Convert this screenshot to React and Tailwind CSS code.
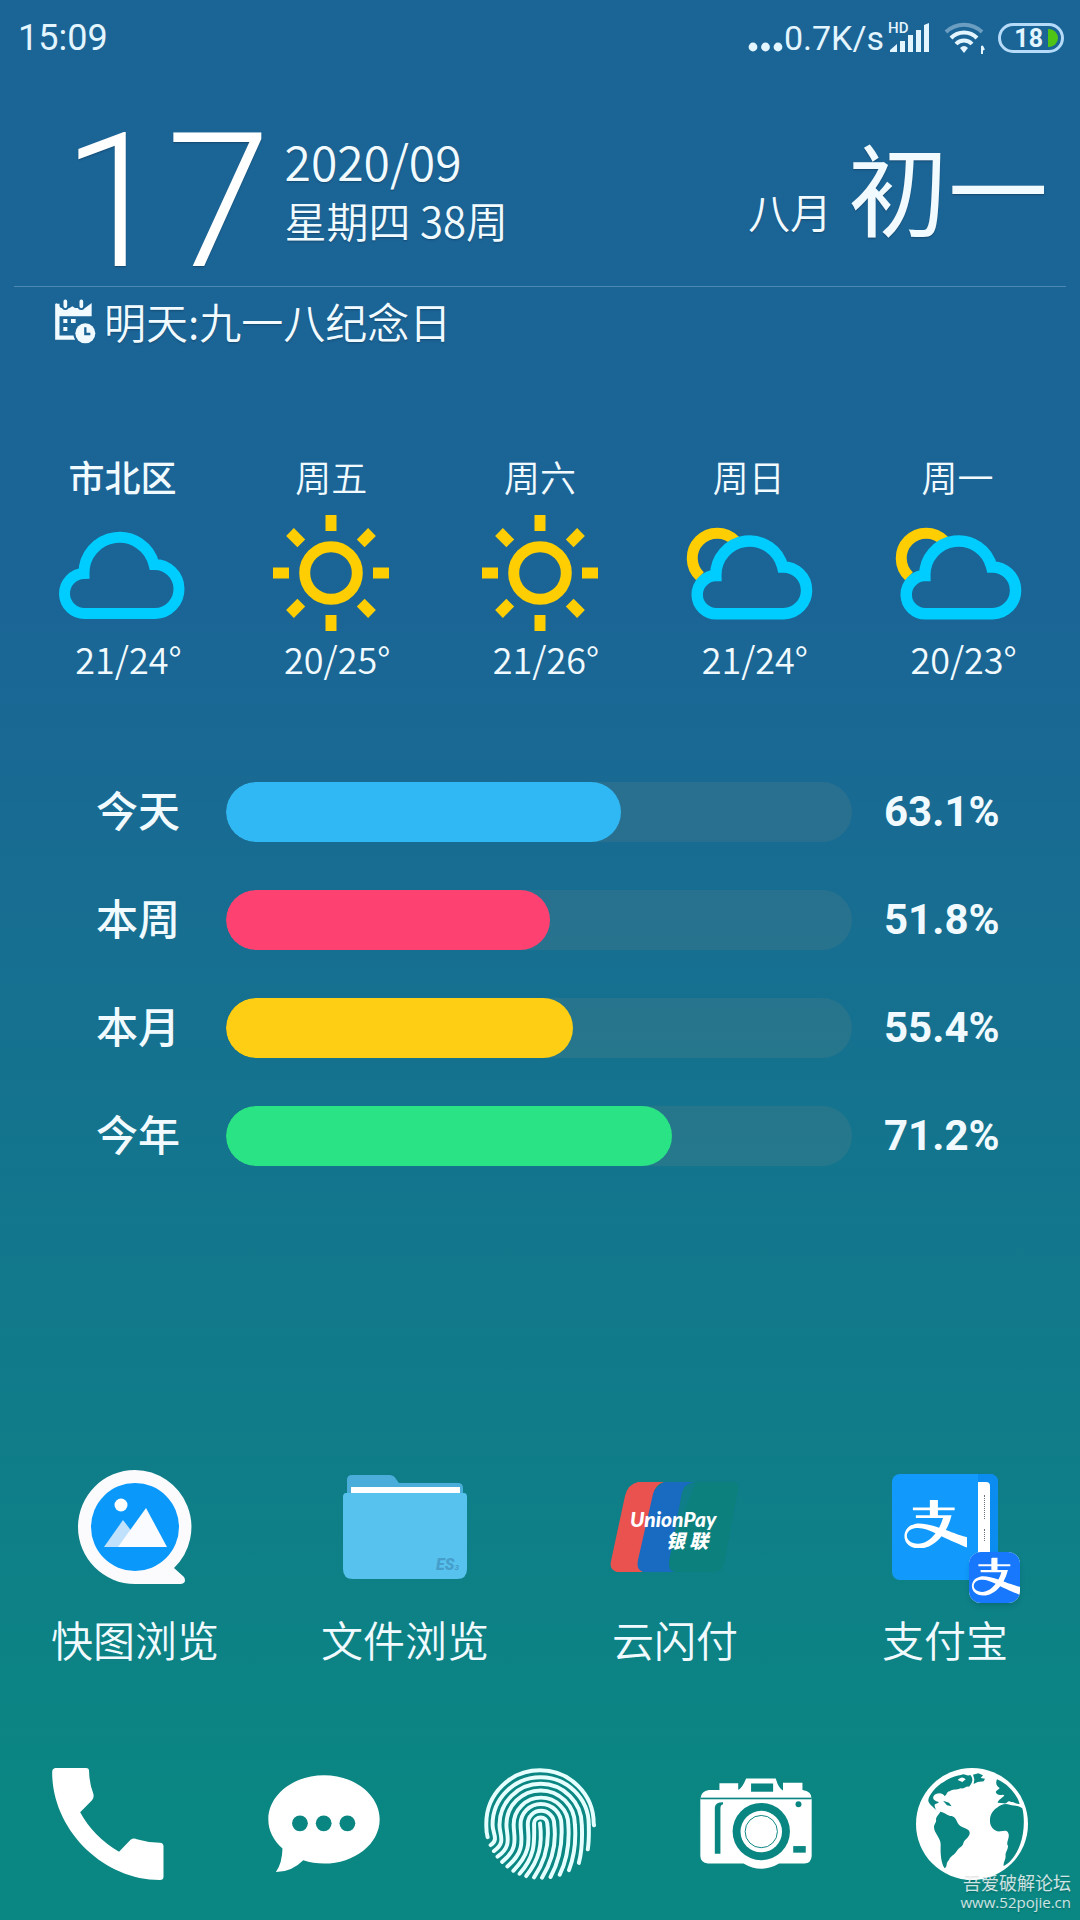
import React from 'react';
import { SiAlipay } from 'react-icons/si';

const forecast = [
    { day: '市北区', icon: 'cloud', temp: '21/24°', current: true },
    { day: '周五', icon: 'sun', temp: '20/25°' },
    { day: '周六', icon: 'sun', temp: '21/26°' },
    { day: '周日', icon: 'partly', temp: '21/24°' },
    { day: '周一', icon: 'partly', temp: '20/23°' },
];

const progress = [
    { label: '今天', value: 63.1, color: 'bg-[#2fb8f4]' },
    { label: '本周', value: 51.8, color: 'bg-[#fd4272]' },
    { label: '本月', value: 55.4, color: 'bg-[#fdce13]' },
    { label: '今年', value: 71.2, color: 'bg-[#29e384]' },
];

const CLOUD = 'M26 65.5 A35.5 35.5 0 0 1 96 56.5 A24.5 24.5 0 0 1 97 105.5 H27 A20 20 0 0 1 26 65.5 Z';

const RIDGES = [
    'M81 292 C76 275 77 262 77 250 A163 161 0 0 1 403 250 L404 256',
    'M90 316 C116 300 96 280 96 254 A146 144 0 0 1 388 254 C389 285 388 310 385 329',
    'M100 334 C138 308 117 286 117 255 A125 125 0 0 1 367 255 C369 300 366 340 358 370',
    'M111 351 C158 318 138 288 138 254 A104 104 0 0 1 346 254 C350 305 342 355 328 392',
    'M125 367 C178 325 160 292 160 254 A83 82 0 0 1 326 254 C330 310 320 365 300 406',
    'M141 381 C200 330 181 295 181 253 A62 62 0 0 1 305 253 C309 312 300 362 272 413',
    'M159 394 C220 332 203 295 203 252 A40 40 0 0 1 283 252 C291 312 277 365 246 415',
    'M178 403 C230 345 222 300 222 250 A20 18 0 0 1 262 250 C270 312 255 365 222 414',
    'M240 250 C248 315 238 360 198 410',
];

function WeatherIcon({ type }) {
    return (
        <svg viewBox="0 0 128 128" className="h-32 w-32" fill="none" strokeWidth="11" aria-hidden="true">
            {type === 'cloud' && <path d={CLOUD} transform="translate(0 -1)" stroke="#00cdff" />}
            {type === 'sun' && (
                <g stroke="#fecd02">
                    <circle cx="64" cy="64" r="26.3" />
                    {[0, 45, 90, 135, 180, 225, 270, 315].map((angle) => (
                        <path key={angle} d="M64 6 V22" transform={`rotate(${angle} 64 64)`} />
                    ))}
                </g>
            )}
            {type === 'partly' && (
                <g transform="translate(0 -1)">
                    <path d="M50 32.6 A25 25 0 1 0 15 68.3" stroke="#fecd02" />
                    <path d={CLOUD} transform="translate(6 5) scale(.955)" strokeWidth="12" stroke="#00cdff" />
                </g>
            )}
        </svg>
    );
}

function StatusBar() {
    return (
        <div className="flex h-[72px] items-center justify-between pl-[18px] pr-4 pt-1 font-['Roboto',sans-serif] font-normal text-[#e3f5ff]">
            <span className="text-[36px] leading-none">15:09</span>
            <div className="flex items-center">
                <svg viewBox="0 0 36 28" className="h-7 w-9" fill="currentColor" aria-hidden="true">
                    <circle cx="5" cy="23" r="4.4" />
                    <circle cx="17.5" cy="23" r="4.4" />
                    <circle cx="30" cy="23" r="4.4" />
                </svg>
                <span className="text-[34px] leading-none">0.7K/s</span>
                {/* Señal */}
                <svg viewBox="0 0 42 38" className="ml-1 h-[38px] w-[42px]" fill="currentColor" aria-hidden="true">
                    <text x="0" y="14" fontSize="15" fontWeight="500" fontFamily="Roboto, sans-serif">HD</text>
                    <path d="M2 33 V31 L9 25 V33 Z M12 22 h5 v11 h-5z M20 16 h5 v17 h-5z M28 11 h5 v22 h-5z M36 6 L41 4 V33 H36 Z" />
                </svg>
                {/* Wifi */}
                <svg viewBox="0 0 42 34" className="ml-[14px] h-[34px] w-[42px]" fill="none" stroke="currentColor" strokeWidth="4" aria-hidden="true">
                    <path d="M2 11 A26 26 0 0 1 38 11" opacity=".4" />
                    <path d="M7 17 A18 18 0 0 1 33 17" />
                    <path d="M12 23 A11 11 0 0 1 28 23" />
                    <path d="M16 27 Q20 23 24 27 L20 32 Z" fill="currentColor" stroke="none" />
                    <path d="M38 33 V25 L40 29" strokeWidth="2" />
                </svg>
                <div className="ml-3 flex h-[30px] w-[66px] items-center justify-end gap-[5px] rounded-full border-[3px] border-[#b5dbf8] pr-[3px]">
                    <span className="text-[25px] font-bold leading-none">18</span>
                    <span className="h-[18px] w-[10px] rounded-l-[2px] rounded-r-full bg-[#4fc414]" />
                </div>
            </div>
        </div>
    );
}

function CalendarIcon() {
    return (
        <svg viewBox="0 0 123 135" className="h-[45px] w-[41px]" fill="none" stroke="#f1faff" aria-hidden="true">
            <path d="M7 14 V116 H60" strokeWidth="13" />
            <path d="M3 12 L18 27 H44 L52 22 L60 27 H90 L110 12 V52 H3 Z" fill="#f1faff" stroke="none" />
            <path d="M31 5 V22 M79 5 V22" stroke="#1b6496" strokeWidth="22" strokeLinecap="round" />
            <path d="M31 7 V22 M79 7 V22" strokeWidth="11" strokeLinecap="round" />
            <path d="M25 66 H37 M48 66 H62 M25 90 H37" strokeWidth="12" />
            <circle cx="91" cy="103" r="36" fill="#1b6496" stroke="none" />
            <circle cx="91" cy="103" r="30" fill="#f1faff" stroke="none" />
            <path d="M91 85 V105 H106" stroke="#1b6496" strokeWidth="7" />
        </svg>
    );
}

function QuickPicIcon() {
    return (
        <svg viewBox="0 0 114 114" className="h-[114px] w-[114px]" aria-hidden="true">
            <path d="M57 0 A57 57 0 0 1 96 98 L106 107 Q109 113 103 114 H57 A57 57 0 0 1 57 0 Z" fill="#fbfbfd" />
            <circle cx="57" cy="57" r="44" fill="#0b98fb" />
            <circle cx="43" cy="35" r="6.5" fill="#fff" />
            <path d="M26 77 L45 50 L55 63 L45 77 Z" fill="#bfe1fc" />
            <path d="M40 77 L68 38 L89 77 Z" fill="#f9fbfe" />
        </svg>
    );
}

function FolderIcon() {
    return (
        <svg viewBox="0 0 124 104" className="h-[104px] w-[124px]" aria-hidden="true">
            <path d="M4 24 V5 Q4 0 9 0 H46 Q51 0 53 4 L56 8 H115 Q120 8 120 13 V24 Z" fill="#4badd9" />
            <path d="M3 18 H121 Q124 18 124 22 V94 Q124 104 114 104 H10 Q0 104 0 94 V22 Q0 18 3 18 Z" fill="#58c2ef" />
            <rect x="8" y="12" width="109" height="6" fill="#fff" />
            <text x="93" y="95" fontSize="16" fontWeight="900" fontStyle="italic" fontFamily="Roboto, sans-serif" fill="#469fcb">
                ES<tspan fontSize="8">3</tspan>
            </text>
        </svg>
    );
}

function UnionPayIcon() {
    return (
        <svg viewBox="0 0 130 90" className="h-[90px] w-[130px]" aria-hidden="true">
            <path d="M86 0 H123 Q130 0 128 8 L114 82 Q112 90 104 90 H50 Z" fill="#0c807d" />
            <path d="M54 0 H84 Q74 2 72 10 L59 80 Q58 90 66 90 H34 Q24 88 27 78 L42 10 Z" fill="#186bc1" />
            <path d="M28 0 H54 Q46 2 43 12 L28 78 Q26 88 33 90 H7 Q-1 88 1 79 L15 14 Q18 2 28 0 Z" fill="#e9524f" />
            <text x="20" y="45" fontSize="21" fontWeight="900" fontStyle="italic" fontFamily="Lato, sans-serif" fill="#fff">UnionPay</text>
            <text x="56" y="66" fontSize="19" fontWeight="900" fontStyle="italic" fontFamily="'Noto Sans CJK SC', sans-serif" fill="#fff">银 联</text>
        </svg>
    );
}

function AlipayIcon() {
    return (
        <div className="relative h-[106px] w-[106px] rounded-lg bg-[#119afb] pl-[9px] pt-[26px]">
            <div className="h-[48px] w-[66px] overflow-hidden bg-white">
                <SiAlipay className="-ml-[2px] -mt-[10px] h-[70px] w-[70px] max-w-none text-[#119afb]" />
            </div>
            <div className="absolute right-0 top-0 h-[106px] w-5 rounded-r-lg bg-[#0a8cf0]" />
            <div className="absolute right-2 top-2 flex h-[72px] w-3 flex-col items-center justify-around rounded-tr bg-white py-2">
                <span className="h-6 w-0 border-l border-dotted border-gray-500" />
                <span className="h-3 w-0 border-l border-dotted border-gray-500" />
            </div>
            <div className="absolute -bottom-[23px] -right-[22px] h-[51px] w-[51px] overflow-hidden rounded-xl bg-white shadow-md">
                <SiAlipay className="h-full w-full scale-105 text-[#1777fd]" />
            </div>
        </div>
    );
}

const apps = [
    { name: '快图浏览', Icon: QuickPicIcon },
    { name: '文件浏览', Icon: FolderIcon },
    { name: '云闪付', Icon: UnionPayIcon },
    { name: '支付宝', Icon: AlipayIcon },
];

function PhoneIcon() {
    return (
        <svg viewBox="65 82 339 340" className="h-28 w-28" fill="#fff" aria-hidden="true">
            <path d="M75 82 H168 Q177 82 177 92 Q178 130 190 160 Q193 172 186 180 L150 216 Q190 290 268 336 L303 300 Q312 293 322 298 Q355 308 392 309 Q403 310 403 320 V412 Q403 422 392 422 C220 422 65 270 65 95 Q65 83 75 82 Z" />
        </svg>
    );
}

function MessageIcon() {
    return (
        <svg viewBox="714 82 338 340" className="h-28 w-28" fill="#fff" aria-hidden="true">
            <path d="M883 104 C976 104 1052 164 1052 238 C1052 312 976 372 883 372 Q850 372 820 362 Q785 398 737 398 Q756 370 757 326 C730 302 714 272 714 238 C714 164 790 104 883 104 Z" />
            <g fill="#0a8682">
                <circle cx="810" cy="250" r="24" />
                <circle cx="882" cy="250" r="24" />
                <circle cx="954" cy="250" r="24" />
            </g>
        </svg>
    );
}

function FingerprintIcon() {
    return (
        <svg viewBox="70 82 340 340" className="h-28 w-28" fill="none" stroke="#e6ffff" strokeWidth="12" strokeLinecap="round" aria-hidden="true">
            {RIDGES.map((d) => <path key={d} d={d} />)}
        </svg>
    );
}

function CameraIcon() {
    return (
        <svg viewBox="719 82 338 340" className="h-28 w-28" fill="#fff" aria-hidden="true">
            <path d="M777 128 H834 V148 Q846 144 858 114 H948 Q956 144 970 150 V127 H1029 V149 Q1057 152 1057 176 V350 Q1055 372 1035 372 H958 Q904 404 850 372 H742 Q720 370 719 350 V176 Q721 152 745 149 H777 Z" />
            <g fill="#0a8682">
                <rect x="873" y="129" width="67" height="25" />
                <rect x="719" y="172" width="338" height="5" />
                <path d="M763 342 V202 Q764 186 788 186 V192 Q780 194 780 204 V342 Z" />
                <circle cx="1017" cy="192" r="9" />
                <rect x="1001" y="319" width="38" height="20" />
                <circle cx="904" cy="275" r="87" />
            </g>
            <circle cx="904" cy="275" r="63" />
            <circle cx="904" cy="275" r="49" fill="none" stroke="#0a8682" strokeWidth="3" />
        </svg>
    );
}

function GlobeIcon() {
    return (
        <svg viewBox="77 82 336 336" className="h-28 w-28" aria-hidden="true">
            <circle cx="245" cy="250" r="168" fill="#fff" />
            <g fill="#0a8682">
                <path d="M150 213 C165 215 172 226 184 226 C200 230 198 248 210 256 C225 264 240 266 238 279 C235 292 222 296 219 308 C216 320 205 320 199 332 C192 344 180 346 176 358 C166 366 172 378 163 383 C152 366 150 340 151 312 C152 292 130 276 131 258 C132 248 139 246 137 234 C140 225 145 222 150 213 Z" />
                <path d="M322 200 C330 192 345 187 358 192 C370 196 380 192 396 203 C404 235 401 280 390 310 C378 345 357 368 340 376 C338 366 346 358 346 346 C343 336 354 326 353 316 C345 306 360 292 354 278 C350 266 338 272 330 272 C312 274 298 258 299 240 C298 224 308 208 322 200 Z" />
                <path d="M115 184 C108 172 136 136 160 124 C176 112 200 104 212 103 C222 96 228 108 240 103 C252 118 244 128 236 138 C228 134 222 146 210 143 C198 150 188 144 178 152 C166 154 172 164 162 166 C158 155 136 156 130 166 C124 176 136 182 146 184 C140 192 132 186 133 196 C134 206 142 212 146 218 C140 206 122 198 115 184 Z" />
                <path d="M320 116 C350 128 380 160 388 190 C378 192 372 182 362 184 C352 176 350 192 340 188 L322 186 C324 176 338 172 342 164 C338 158 326 168 318 158 C312 150 326 148 328 142 C320 136 314 130 320 116 Z" />
                <path d="M248 102 L264 98 L278 104 L271 112 L284 114 L280 122 L262 124 L250 130 L252 116 Z" />
                <path d="M158 180 L176 186 L184 197 L170 194 Z" />
            </g>
            <path d="M202 118 Q214 104 226 116 L216 124 Z" fill="#fff" />
        </svg>
    );
}

const dock = [
    { name: '电话', Icon: PhoneIcon },
    { name: '短信', Icon: MessageIcon },
    { name: '指纹', Icon: FingerprintIcon },
    { name: '相机', Icon: CameraIcon },
    { name: '浏览器', Icon: GlobeIcon },
];

export default function App() {
    return (
        <div className="relative flex min-h-screen flex-col overflow-hidden bg-linear-to-b from-[#1b6496] from-30% to-[#0a8782] to-95% font-['Noto_Sans_CJK_SC',sans-serif] font-[350] text-[#f1fbff]">
            <StatusBar />

            {/* Fecha */}
            <header className="mx-[14px] mt-[46px] border-b border-[#4d89b3] text-shadow-sm">
                <div className="flex items-center pl-12 pr-[18px]">
                    <span className="font-['Roboto',sans-serif] text-[188px] font-light leading-[168px] text-white">17</span>
                    <div className="ml-[14px] pb-6">
                        <p className="text-[48px] leading-[60px]">2020/09</p>
                        <p className="text-[42px] leading-[60px]">星期四 38周</p>
                    </div>
                    <div className="ml-auto flex items-baseline gap-4 pb-8">
                        <span className="text-[42px] leading-none">八月</span>
                        <span className="text-[100px] font-normal leading-none">初一</span>
                    </div>
                </div>
            </header>
            <div className="flex h-[68px] items-center gap-2 pl-[55px] text-shadow-sm">
                <CalendarIcon />
                <p className="text-[42px] leading-none">明天:九一八纪念日</p>
            </div>

            {/* Clima */}
            <section className="mt-24 grid grid-cols-5 px-[18px]">
                {forecast.map(({ day, icon, temp, current }) => (
                    <div key={day} className="flex flex-col items-center text-[36px] leading-[50px]">
                        <span className={current ? 'font-medium' : ''}>{day}</span>
                        <span className="mt-2"><WeatherIcon type={icon} /></span>
                        <span className="pl-3 leading-[42px]">{temp}</span>
                    </div>
                ))}
            </section>

            {/* Progreso del tiempo */}
            <section className="mt-[103px] flex flex-col gap-12 pl-24 pr-20">
                {progress.map(({ label, value, color }) => (
                    <div key={label} className="flex h-[60px] items-center">
                        <span className="w-[130px] pb-[6px] text-[42px] font-medium leading-none">{label}</span>
                        <div
                            role="progressbar"
                            aria-label={label}
                            aria-valuenow={value}
                            className="h-full flex-1 overflow-hidden rounded-full bg-[#8c8c80]/15"
                        >
                            <div className={`h-full rounded-full ${color}`} style={{ width: `${value}%` }} />
                        </div>
                        <span className="w-[148px] pl-8 font-['Roboto',sans-serif] text-[42px] font-bold leading-none">{value}%</span>
                    </div>
                ))}
            </section>

            {/* Aplicaciones */}
            <section className="mt-auto grid grid-cols-4">
                {apps.map(({ name, Icon }) => (
                    <button key={name} className="flex cursor-pointer flex-col items-center">
                        <span className="flex h-[114px] items-center"><Icon /></span>
                        <span className="mt-[30px] text-[42px] leading-[50px]">{name}</span>
                    </button>
                ))}
            </section>

            <nav className="mb-10 mt-[104px] grid grid-cols-5">
                {dock.map(({ name, Icon }) => (
                    <button key={name} aria-label={name} className="flex cursor-pointer justify-center">
                        <Icon />
                    </button>
                ))}
            </nav>

            {/* Marca de agua */}
            <div className="absolute bottom-[10px] right-[9px] text-right font-normal text-white/80 text-shadow-sm">
                <p className="text-[18px] leading-6">吾爱破解论坛</p>
                <p className="font-['Open_Sans',sans-serif] text-[15px] leading-4">www.52pojie.cn</p>
            </div>
        </div>
    );
}
